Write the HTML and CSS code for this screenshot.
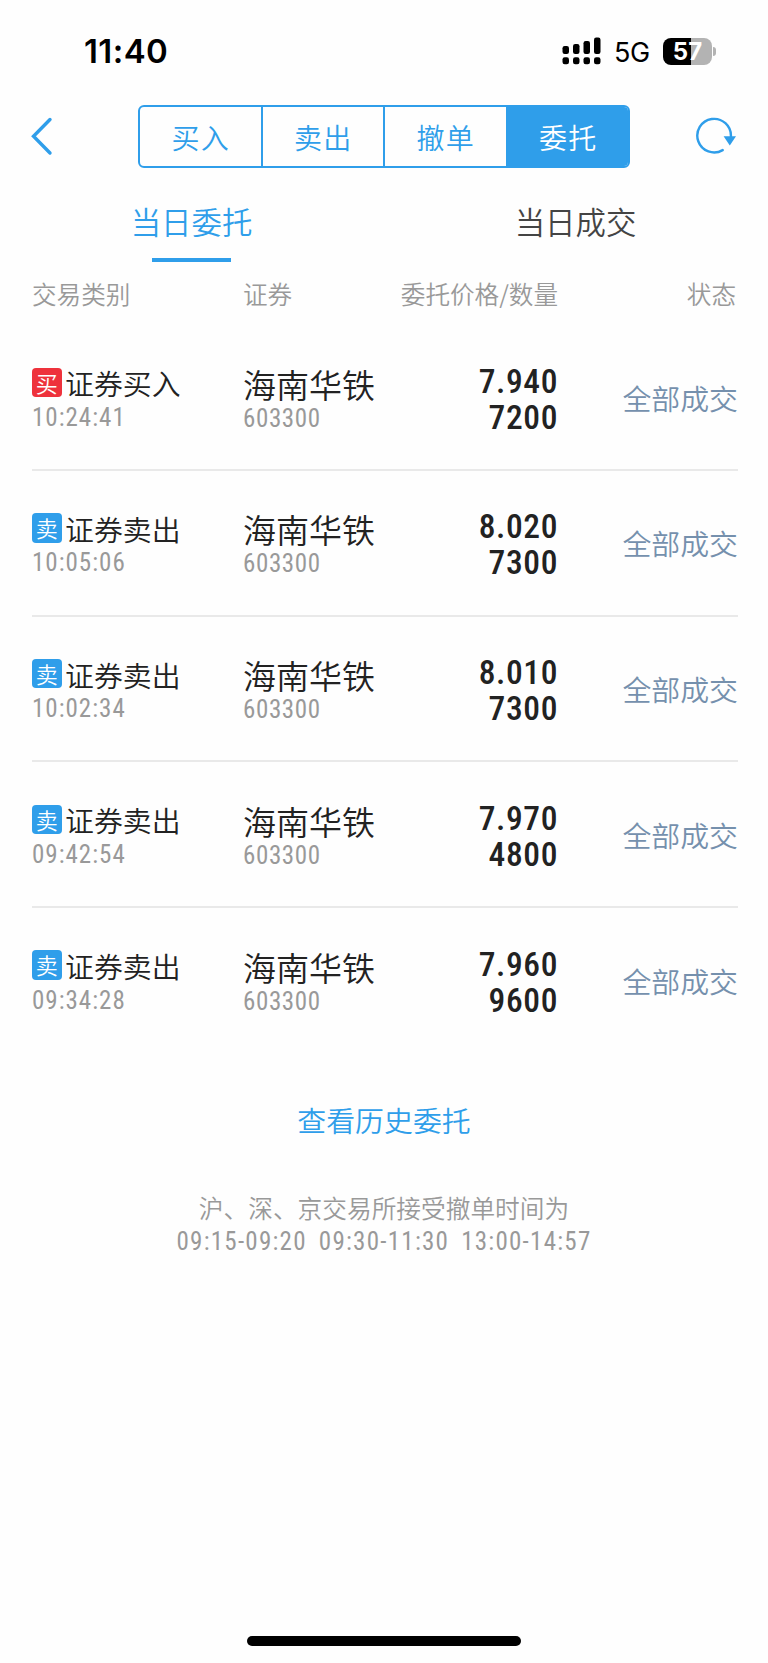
FILE: index.html
```html
<!DOCTYPE html>
<html lang="zh-CN">
<head>
  <meta charset="UTF-8" />
  <meta name="viewport" content="width=device-width, initial-scale=1.0" />
  <title>当日委托</title>
  <link rel="stylesheet" href="styles.css">
</head>
<body>
  <div class="status-bar">
    <div class="clock">11:40</div>
    <div class="status-icons">
      <svg class="signal" width="40" height="28" viewBox="0 0 40 28">
        <rect x="0.5" y="9" width="6.5" height="8" rx="2.2"/>
        <rect x="11" y="7" width="6.5" height="10" rx="2.2"/>
        <rect x="21.5" y="4" width="6.5" height="13" rx="2.2"/>
        <rect x="32" y="0.5" width="6.5" height="16.5" rx="2.2"/>
        <rect x="0.5" y="20.3" width="6.5" height="7" rx="2.2"/>
        <rect x="11" y="20.3" width="6.5" height="7" rx="2.2"/>
        <rect x="21.5" y="20.3" width="6.5" height="7" rx="2.2"/>
        <rect x="32" y="20.3" width="6.5" height="7" rx="2.2"/>
      </svg>
      <span class="network">5G</span>
      <div class="battery">57</div>
      <span class="battery-cap"></span>
    </div>
  </div>

  <header>
    <svg class="back" width="24" height="40" viewBox="0 0 24 40">
      <path d="M19 3.5 L2.5 20.3 L19 37"/>
    </svg>
    <div class="segments">
      <div class="segment">买入</div>
      <div class="segment">卖出</div>
      <div class="segment">撤单</div>
      <div class="segment active">委托</div>
    </div>
    <svg class="refresh" width="42" height="40" viewBox="0 0 42 40">
      <path class="ring" d="M27.7 34.1 A16.8 16.8 0 1 1 35.9 20.5"/>
      <path class="arrow" d="M28.6 20.2 H41 L34.8 29.5 Z"/>
    </svg>
  </header>

  <div class="tabs">
    <div class="tab active">当日委托</div>
    <div class="tab">当日成交</div>
  </div>

  <div class="table-head">
    <span>交易类别</span>
    <span>证券</span>
    <span class="right">委托价格/数量</span>
    <span class="right">状态</span>
  </div>

  <div class="orders">
    <div class="order">
      <div class="category">
        <div class="type"><span class="badge buy">买</span>证券买入</div>
        <div class="sub">10:24:41</div>
      </div>
      <div class="stock">
        <div class="stock-name">海南华铁</div>
        <div class="sub">603300</div>
      </div>
      <div class="price">7.940<br>7200</div>
      <div class="state">全部成交</div>
    </div>
    <div class="order">
      <div class="category">
        <div class="type"><span class="badge sell">卖</span>证券卖出</div>
        <div class="sub">10:05:06</div>
      </div>
      <div class="stock">
        <div class="stock-name">海南华铁</div>
        <div class="sub">603300</div>
      </div>
      <div class="price">8.020<br>7300</div>
      <div class="state">全部成交</div>
    </div>
    <div class="order">
      <div class="category">
        <div class="type"><span class="badge sell">卖</span>证券卖出</div>
        <div class="sub">10:02:34</div>
      </div>
      <div class="stock">
        <div class="stock-name">海南华铁</div>
        <div class="sub">603300</div>
      </div>
      <div class="price">8.010<br>7300</div>
      <div class="state">全部成交</div>
    </div>
    <div class="order">
      <div class="category">
        <div class="type"><span class="badge sell">卖</span>证券卖出</div>
        <div class="sub">09:42:54</div>
      </div>
      <div class="stock">
        <div class="stock-name">海南华铁</div>
        <div class="sub">603300</div>
      </div>
      <div class="price">7.970<br>4800</div>
      <div class="state">全部成交</div>
    </div>
    <div class="order">
      <div class="category">
        <div class="type"><span class="badge sell">卖</span>证券卖出</div>
        <div class="sub">09:34:28</div>
      </div>
      <div class="stock">
        <div class="stock-name">海南华铁</div>
        <div class="sub">603300</div>
      </div>
      <div class="price">7.960<br>9600</div>
      <div class="state">全部成交</div>
    </div>
  </div>

  <div class="history">查看历史委托</div>

  <div class="note">沪、深、京交易所接受撤单时间为</div>
  <div class="hours"><span>09:15-09:20</span><span>09:30-11:30</span><span>13:00-14:57</span></div>

  <div class="home-bar"></div>
</body>
</html>
```
FILE: styles.css
```css
:root {
  --blue: #2f9eea;
  --red: #ee323c;
  --text: #222;
  --gray: #999;
  --state: #7590ad;
  --line: #e9e9e9;
}

* {
  box-sizing: border-box;
}

body {
  margin: 0;
  height: 1663px;
  display: flex;
  flex-direction: column;
  font-family: "Noto Sans CJK SC", sans-serif;
  font-weight: 350;
  background: #fefefe;
  color: var(--text);
  overflow: hidden;
}

/* phone status bar */
.status-bar {
  height: 104px;
  padding: 0 52px 2px 84px;
  display: flex;
  justify-content: space-between;
  align-items: center;
  font-family: Inter, sans-serif;
  color: #000;
}

.clock {
  font-size: 33px;
  font-weight: 600;
  letter-spacing: 0.4px;
}

.status-icons {
  display: flex;
  align-items: center;
}

.network {
  width: 36px;
  margin: 2px 13px 0 12px;
  font-size: 27px;
  font-weight: 400;
  letter-spacing: -0.5px;
}

.battery {
  width: 49px;
  height: 27px;
  border-radius: 8px;
  background: linear-gradient(to right, #000 58%, #b3b3b3 58%);
  color: #fff;
  font-size: 24px;
  font-weight: 700;
  line-height: 27px;
  text-align: center;
}

.battery-cap {
  width: 3px;
  height: 9px;
  margin-left: 1px;
  border-radius: 0 4px 4px 0;
  background: #b3b3b3;
}

/* navigation */
header {
  height: 64px;
  padding: 0 31px;
  display: flex;
  justify-content: space-between;
  align-items: center;
}

.back path {
  fill: none;
  stroke: var(--blue);
  stroke-width: 3.4;
  stroke-linecap: round;
}

.ring {
  fill: none;
  stroke: var(--blue);
  stroke-width: 2.4;
  stroke-linecap: round;
}

.arrow {
  fill: var(--blue);
}

.segments {
  width: 492px;
  height: 63px;
  margin-left: 18px;
  display: flex;
  border: 2px solid var(--blue);
  border-radius: 6px;
  overflow: hidden;
}

.segment {
  flex: 1;
  line-height: 60px;
  padding-left: 1px;
  text-align: center;
  font-size: 28px;
  letter-spacing: 1.3px;
  color: var(--blue);
}

.segment + .segment {
  border-left: 2px solid var(--blue);
}

.segment.active {
  background: var(--blue);
  color: #fff;
}

.tabs {
  height: 94px;
  display: flex;
}

.tab {
  flex: 1;
  display: flex;
  flex-direction: column;
  align-items: center;
  padding: 31px 1px 0 0;
  font-size: 30.4px;
  line-height: 44px;
  color: #444;
}

.tab.active {
  color: var(--blue);
}

.tab.active::after {
  content: "";
  width: 79px;
  height: 4px;
  margin-top: 15px;
  background: var(--blue);
}

/* order list */
.table-head,
.order {
  display: grid;
  grid-template-columns: 211px 143px 172px 1fr;
  margin: 0 30px 0 32px;
}

.table-head {
  height: 63.3px;
  padding: 13px 2px 0 0;
  font-size: 24.6px;
  line-height: 36px;
  color: var(--gray);
  white-space: nowrap;
}

.right {
  text-align: right;
}

.order {
  height: 145.7px;
  padding-top: 38.5px;
  align-items: start;
  border-bottom: 2px solid var(--line);
}

.order:last-child {
  border-bottom: none;
}

.type {
  display: flex;
  align-items: center;
  height: 37px;
  font-size: 28.9px;
  line-height: 34px;
}

.badge {
  width: 29.5px;
  height: 29.5px;
  margin-right: 3.5px;
  border-radius: 4px;
  color: #fff;
  font-size: 22px;
  line-height: 29px;
  text-align: center;
}

.buy {
  background: var(--red);
}

.sell {
  background: var(--blue);
}

.sub {
  font-family: Roboto, sans-serif;
  font-size: 25px;
  font-weight: 450;
  font-stretch: 87%;
  line-height: 26px;
  letter-spacing: 0.6px;
  color: var(--gray);
}

.category .sub {
  margin-top: 4px;
  letter-spacing: 1px;
}

.stock-name {
  height: 42px;
  font-size: 33px;
  line-height: 40px;
}

.price {
  font-family: Roboto, sans-serif;
  font-size: 33.5px;
  font-weight: 500;
  font-stretch: 87%;
  line-height: 36px;
  letter-spacing: 0.6px;
  text-align: right;
}

.state {
  padding-top: 13px;
  font-size: 28.9px;
  line-height: 40px;
  text-align: right;
  color: var(--state);
}

/* footer texts */
.history {
  margin-top: 43px;
  font-size: 28.9px;
  line-height: 44px;
  text-align: center;
  color: var(--blue);
}

.note {
  margin-top: 48px;
  font-size: 24.7px;
  line-height: 36px;
  text-align: center;
  color: var(--gray);
}

.hours {
  display: flex;
  justify-content: center;
  gap: 12px;
  margin-top: 3px;
  font-family: Roboto, sans-serif;
  font-size: 25px;
  font-weight: 450;
  font-stretch: 87%;
  line-height: 27px;
  letter-spacing: 1.25px;
  color: var(--gray);
}

.home-bar {
  width: 274px;
  height: 10px;
  margin: auto auto 17px;
  border-radius: 5px;
  background: #000;
}
```
